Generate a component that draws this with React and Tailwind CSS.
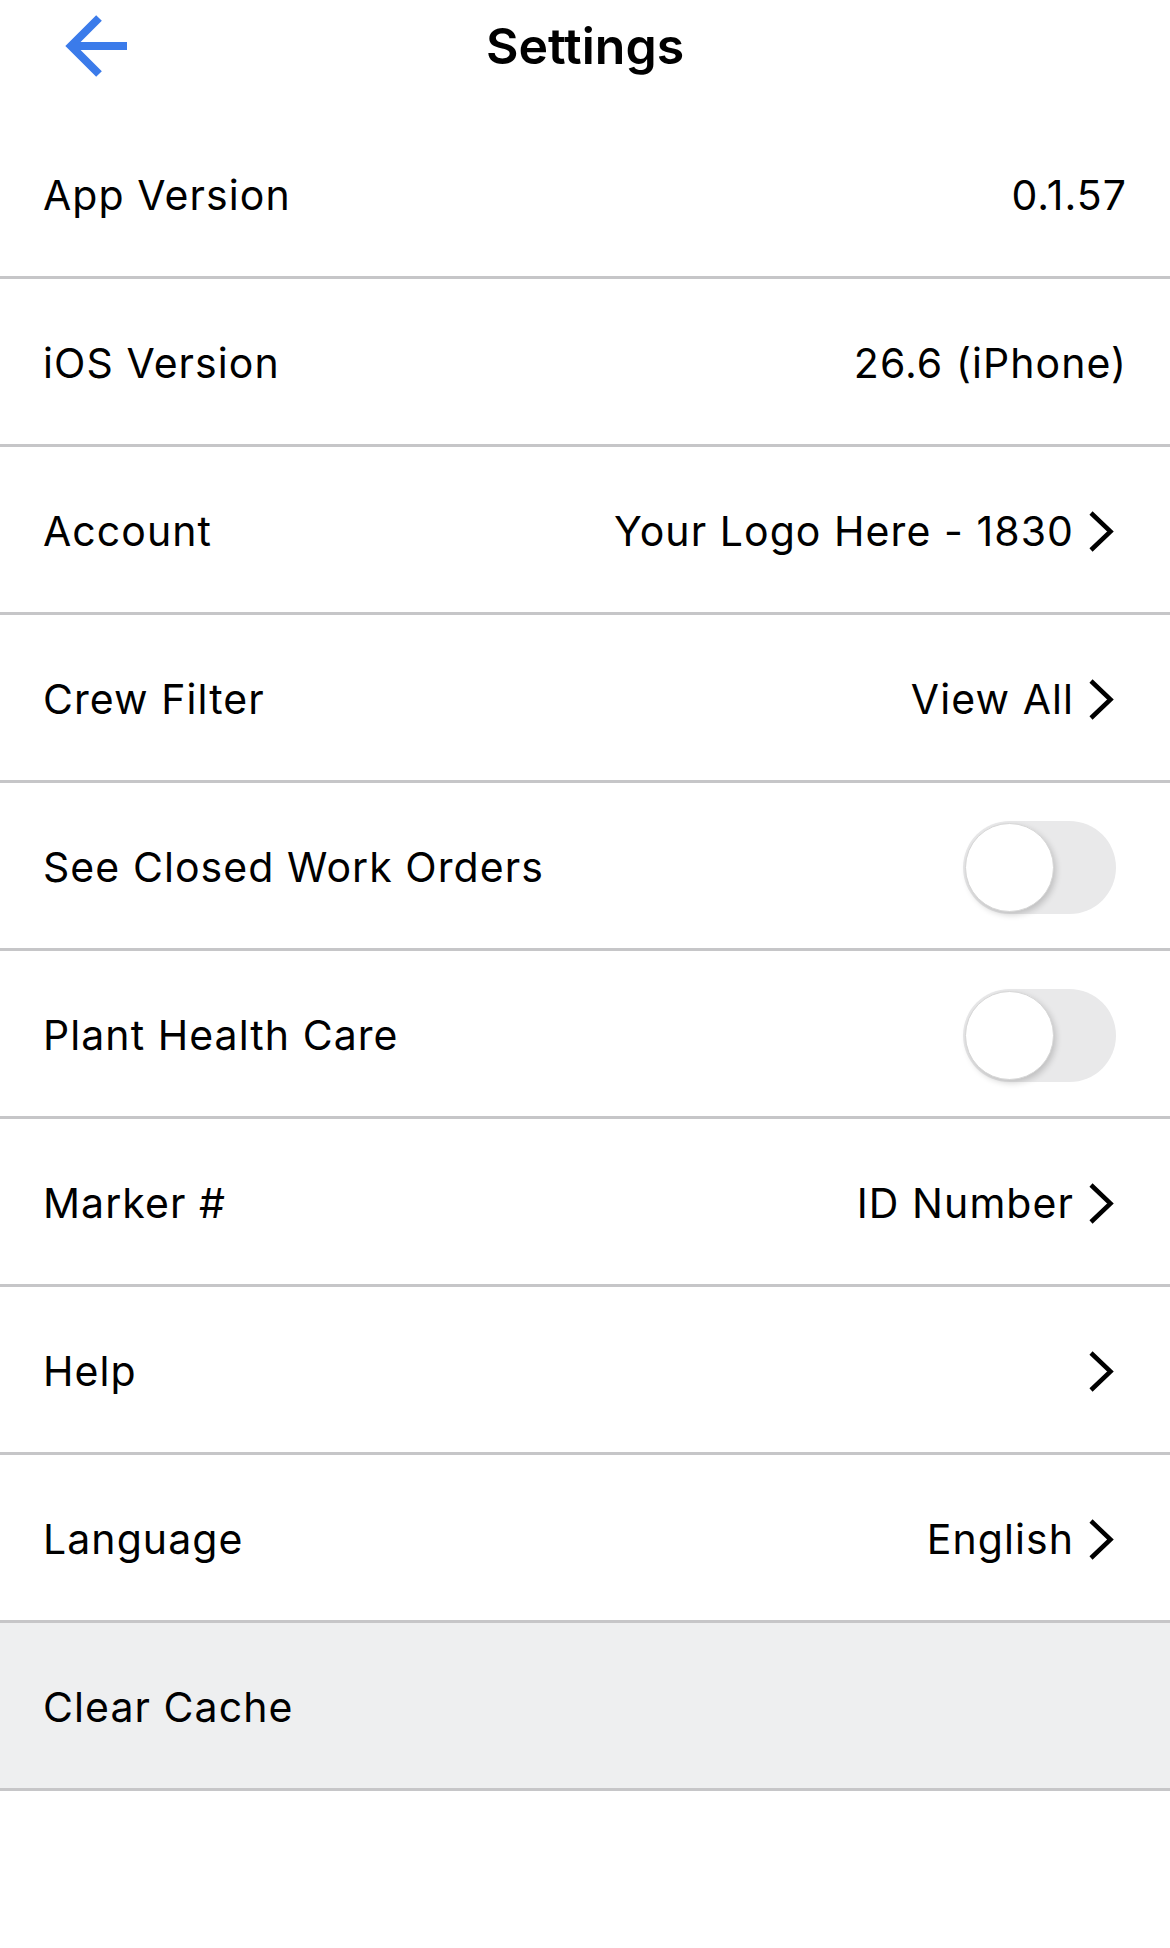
const rows = [
  { label: "App Version", value: "0.1.57" },
  { label: "iOS Version", value: "26.6 (iPhone)" },
  { label: "Account", value: "Your Logo Here - 1830", chevron: true },
  { label: "Crew Filter", value: "View All", chevron: true },
  { label: "See Closed Work Orders", toggle: true },
  { label: "Plant Health Care", toggle: true },
  { label: "Marker #", value: "ID Number", chevron: true },
  { label: "Help", chevron: true },
  { label: "Language", value: "English", chevron: true },
  { label: "Clear Cache", gray: true },
];

function Chevron() {
  return (
    <svg width="26" height="43" viewBox="0 0 26 43" className="ml-[14px] mr-[13px] shrink-0">
      <polyline
        points="3,3 22.5,21.5 3,40"
        fill="none"
        stroke="#000"
        strokeWidth="4.5"
        strokeLinecap="butt"
        strokeLinejoin="miter"
      />
    </svg>
  );
}

function Toggle() {
  return (
    <div className="mr-[11px] w-[153px] h-[93px] rounded-full bg-[#e9e9ea] flex items-center px-[2px]">
      <div className="w-[89px] h-[89px] rounded-full bg-white border border-[#d6d6d6] shadow-[2px_3px_6px_rgba(0,0,0,0.18)]" />
    </div>
  );
}

function Row({ row }) {
  return (
    <div
      className={
        "h-[168px] pt-[4px] border-b-[3px] border-[#c6c6c8] flex items-center justify-between px-[43px] " +
        (row.gray ? "bg-[#eeeff0]" : "bg-white")
      }
    >
      <span className="text-[41px] tracking-[0.026em] text-black">{row.label}</span>
      <div className="flex items-center">
        {row.value && (
          <span className="text-[41px] tracking-[0.026em] text-black">{row.value}</span>
        )}
        {row.chevron && <Chevron />}
        {row.toggle && <Toggle />}
      </div>
    </div>
  );
}

export default function App() {
  return (
    <div className="min-h-screen bg-white" style={{ fontFamily: "Inter, 'Liberation Sans', sans-serif" }}>
      <div className="h-[111px]">
        <div className="h-[92px] grid grid-cols-[1fr_auto_1fr] items-center">
          <div className="pl-[65px]">
            <svg width="64" height="64" viewBox="0 0 64 64">
              <path
                d="M62 32 H6 M34 4 L6 32 L34 60"
                fill="none"
                stroke="#3b7bea"
                strokeWidth="8"
                strokeLinejoin="miter"
              />
            </svg>
          </div>
          <h1 className="text-[50px] font-semibold text-black">Settings</h1>
          <div />
        </div>
      </div>
      {rows.map((r) => (
        <Row key={r.label} row={r} />
      ))}
    </div>
  );
}
